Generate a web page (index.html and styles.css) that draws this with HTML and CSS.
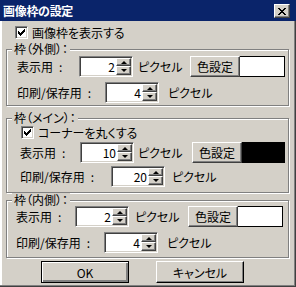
FILE: index.html
```html
<!DOCTYPE html>
<html lang="ja">
<head>
    <meta charset="UTF-8">
    <title>画像枠の設定</title>
    <link rel="stylesheet" href="styles.css">
</head>
<body>

<div class="dialog">
    <div class="titlebar">
        <span class="title">画像枠の設定</span>
        <button class="close-btn">
            <svg width="8" height="7" viewBox="0 0 8 7" shape-rendering="crispEdges">
                <path d="M0 0h2v1h-2zM6 0h2v1h-2zM1 1h2v1h-2zM5 1h2v1h-2zM2 2h4v1h-4zM3 3h2v1h-2zM2 4h4v1h-4zM1 5h2v1h-2zM5 5h2v1h-2zM0 6h2v1h-2zM6 6h2v1h-2z" fill="#000"/>
            </svg>
        </button>
    </div>

    <div class="body">
        <label class="check check-show">
            <span class="box">
                <svg width="7" height="7" viewBox="0 0 7 7" shape-rendering="crispEdges">
                    <path d="M6 0h1v3h-1zM5 1h1v3h-1zM4 2h1v3h-1zM3 3h1v3h-1zM2 4h1v3h-1zM1 3h1v3h-1zM0 2h1v3h-1z" fill="#000"/>
                </svg>
            </span>
            画像枠を表示する
        </label>

        <div class="group group-outer">
            <span class="group-title">枠（外側）：</span>
            <div class="row row-disp">
                <span class="lbl">表示用&ensp;:</span>
                <div class="spin"><span class="val">2</span><span class="arrows"><span class="up"></span><span class="down"></span></span></div>
                <span class="unit">ピクセル</span>
                <button class="color-btn">色設定</button><span class="swatch"></span>
            </div>
            <div class="row row-print">
                <span class="lbl">印刷/保存用&ensp;:</span>
                <div class="spin"><span class="val">4</span><span class="arrows"><span class="up"></span><span class="down"></span></span></div>
                <span class="unit">ピクセル</span>
            </div>
        </div>

        <div class="group group-main">
            <span class="group-title">枠（メイン）：</span>
            <label class="check check-corner">
                <span class="box">
                    <svg width="7" height="7" viewBox="0 0 7 7" shape-rendering="crispEdges">
                        <path d="M6 0h1v3h-1zM5 1h1v3h-1zM4 2h1v3h-1zM3 3h1v3h-1zM2 4h1v3h-1zM1 3h1v3h-1zM0 2h1v3h-1z" fill="#000"/>
                    </svg>
                </span>
                コーナーを丸くする
            </label>
            <div class="row row-disp">
                <span class="lbl">表示用&ensp;:</span>
                <div class="spin"><span class="val">10</span><span class="arrows"><span class="up"></span><span class="down"></span></span></div>
                <span class="unit">ピクセル</span>
                <button class="color-btn">色設定</button><span class="swatch black"></span>
            </div>
            <div class="row row-print">
                <span class="lbl">印刷/保存用&ensp;:</span>
                <div class="spin"><span class="val">20</span><span class="arrows"><span class="up"></span><span class="down"></span></span></div>
                <span class="unit">ピクセル</span>
            </div>
        </div>

        <div class="group group-inner">
            <span class="group-title">枠（内側）：</span>
            <div class="row row-disp">
                <span class="lbl">表示用&ensp;:</span>
                <div class="spin"><span class="val">2</span><span class="arrows"><span class="up"></span><span class="down"></span></span></div>
                <span class="unit">ピクセル</span>
                <button class="color-btn">色設定</button><span class="swatch"></span>
            </div>
            <div class="row row-print">
                <span class="lbl">印刷/保存用&ensp;:</span>
                <div class="spin"><span class="val">4</span><span class="arrows"><span class="up"></span><span class="down"></span></span></div>
                <span class="unit">ピクセル</span>
            </div>
        </div>

        <div class="buttons">
            <button class="push default">OK</button>
            <button class="push">キャンセル</button>
        </div>
    </div>
</div>

</body>
</html>
```

FILE: styles.css
```css
body {
    margin: 0;
    font-family: "Noto Sans CJK JP", "Liberation Sans", sans-serif;
    font-size: 12px;
    font-feature-settings: "palt";
    color: #000;
}
button {
    font: inherit;
    color: #000;
    padding: 0;
    margin: 0;
}
.dialog {
    width: 296px;
    height: 287px;
    background: #d4d0c8;
    box-shadow: inset -1px -1px 0 #404040, inset -2px -2px 0 #808080, inset 2px 0 0 #fff;
    overflow: hidden;
}
.titlebar {
    height: 21px;
    background: #0a246a;
    display: flex;
    align-items: flex-start;
    justify-content: space-between;
}
.title {
    color: #fff;
    font-weight: bold;
    line-height: 21px;
    margin-left: 3px;
    letter-spacing: -0.3px;
}
.close-btn {
    width: 16px;
    height: 14px;
    margin: 4px 6px 0 0;
    background: #d4d0c8;
    border: 1px solid;
    border-color: #fff #404040 #404040 #fff;
    box-shadow: inset -1px -1px 0 #808080;
    display: flex;
    align-items: center;
    justify-content: center;
}

/* checkbox */
.check {
    display: flex;
    align-items: center;
    height: 13px;
    line-height: 13px;
}
.check .box {
    width: 13px;
    height: 13px;
    box-sizing: border-box;
    background: #fff;
    border: 1px solid;
    border-color: #808080 #fff #fff #808080;
    box-shadow: inset 1px 1px 0 #404040, inset -1px -1px 0 #d4d0c8;
    display: flex;
    align-items: center;
    justify-content: center;
    margin-right: 4px;
}
.check-show {
    margin: 5px 0 0 15px;
}
.check-corner {
    margin: 7px 0 0 1px;
}

/* group boxes */
.group {
    position: relative;
    margin-left: 6px;
    width: 283px;
    border: 1px solid #808080;
    box-shadow: inset 1px 1px 0 #fff, 1px 1px 0 #fff;
    box-sizing: border-box;
}
.group-title {
    position: absolute;
    top: -8px;
    left: 5px;
    line-height: 14px;
    background: #d4d0c8;
    padding: 0 2px;
}
.group-outer {
    margin-top: 10px;
    padding: 6px 3px 2px 10px;
}
.group-main {
    margin-top: 12px;
    padding: 0 3px 5px 13px;
}
.group-inner {
    margin-top: 7px;
    padding: 5px 5px 4px 9px;
}

.row {
    display: flex;
    align-items: center;
    height: 21px;
}
.group-outer .row-print { margin-top: 5px; }
.group-main .row-disp { margin-top: 3px; }
.group-main .row-print { margin-top: 3px; }
.group-inner .row-print { margin-top: 5px; }

.lbl {
    white-space: nowrap;
}
.group-outer .row-disp .lbl { width: 62px; }
.group-outer .row-print .lbl { width: 88px; }
.group-main .row-disp .lbl { width: 60px; }
.group-main .row-print .lbl { width: 91px; }
.group-inner .row-disp .lbl { width: 59px; }
.group-inner .row-print .lbl { width: 88px; }

/* spin edit */
.spin {
    width: 54px;
    height: 21px;
    box-sizing: border-box;
    padding: 1px;
    background: #fff;
    border: 1px solid;
    border-color: #808080 #fff #fff #808080;
    box-shadow: inset 1px 1px 0 #404040, inset -1px -1px 0 #d4d0c8;
    display: flex;
}
.spin .val {
    flex: 1;
    text-align: right;
    line-height: 17px;
    padding-right: 1px;
}
.arrows {
    width: 15px;
    display: flex;
    flex-direction: column;
}
.arrows span {
    box-sizing: border-box;
    background: #d4d0c8;
    border: 1px solid;
    border-color: #fff #404040 #404040 #fff;
    box-shadow: inset -1px -1px 0 #808080;
    display: flex;
    align-items: center;
    justify-content: center;
}
.arrows .up { height: 8px; }
.arrows .down { height: 9px; }
.arrows .up::after {
    content: "";
    border-left: 3px solid transparent;
    border-right: 3px solid transparent;
    border-bottom: 3px solid #000;
}
.arrows .down::after {
    content: "";
    border-left: 3px solid transparent;
    border-right: 3px solid transparent;
    border-top: 3px solid #000;
}

.unit {
    white-space: nowrap;
}
.group-outer .row-disp .unit { margin-left: 5px; }
.group-outer .row-print .unit { margin-left: 9px; }
.group-main .row-disp .unit { margin-left: 4px; }
.group-main .row-print .unit { margin-left: 7px; }
.group-inner .row-disp .unit { margin-left: 6px; }
.group-inner .row-print .unit { margin-left: 9px; }

/* colour button */
.color-btn {
    margin-left: auto;
    width: 50px;
    height: 21px;
    background: #d4d0c8;
    border: 1px solid;
    border-color: #fff #404040 #404040 #fff;
    box-shadow: inset -1px -1px 0 #808080;
}
.swatch {
    width: 45px;
    height: 21px;
    box-sizing: border-box;
    background: #fff;
    border: 1px solid #000;
    border-left: none;
}
.group-main .swatch { width: 43px; }
.swatch.black { background: #000; }

/* OK / cancel */
.buttons {
    display: flex;
    gap: 27px;
    margin: 3px 0 0 41px;
}
.push {
    width: 88px;
    height: 22px;
    background: #d4d0c8;
    border: 1px solid;
    border-color: #fff #000 #000 #fff;
    box-shadow: inset -1px -1px 0 #808080;
}
.push.default {
    border-color: #000;
    box-shadow: inset 1px 1px 0 #fff, inset -2px -2px 0 #808080;
}
```
